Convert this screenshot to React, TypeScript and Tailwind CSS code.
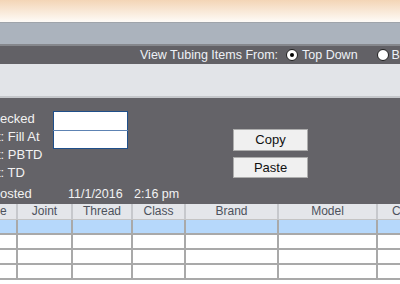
import React from "react";

const cols = [
    { w: "w-[18px]", label: "e", cls: "pl-0 text-left" },
    { w: "w-[55px]", label: "Joint", cls: "text-center" },
    { w: "w-[60px]", label: "Thread", cls: "text-center" },
    { w: "w-[53px]", label: "Class", cls: "text-center" },
    { w: "w-[93px]", label: "Brand", cls: "text-center" },
    { w: "w-[99px]", label: "Model", cls: "text-center" },
];

const Radio = ({ checked }: { checked?: boolean }) => (
    <span className="w-[12px] h-[12px] rounded-full bg-white border border-[#1e1e1e] flex items-center justify-center shrink-0">
        {checked && <span className="w-[4px] h-[4px] rounded-full bg-black" />}
    </span>
);

const Row = ({ selected }: { selected?: boolean }) => (
    <div className={`flex h-[15px] border-b-2 border-[#a9a9a9] ${selected ? "bg-[#b6d8fb]" : "bg-white"}`}>
        {cols.map((c, i) => (
            <div key={i} className={`${c.w} shrink-0 border-r-2 border-[#a9a9a9]`} />
        ))}
        <div className="flex-1" />
    </div>
);

export default function App() {
    return (
        <div className="w-[400px] h-[284px] overflow-hidden bg-white font-['Liberation_Sans',Arial,sans-serif]">
            {/* title gradient */}
            <div className="h-[22px] bg-gradient-to-b from-[#f3d5b6] to-[#fefbf7]" />
            <div className="h-px bg-[#9fa4aa]" />
            <div className="h-[21px] bg-[#abb3bd]" />
            <div className="h-[2px] bg-[#85878c]" />

            {/* view tubing bar */}
            <div className="h-[18px] bg-[#626166] flex items-center text-[12.5px] text-[#eef1f6] whitespace-nowrap">
                <span className="ml-[140px]">View Tubing Items From:</span>
                <span className="ml-[8px] flex items-center gap-[4px]">
                    <Radio checked />
                    <span>Top Down</span>
                </span>
                <span className="ml-[19px] flex items-center gap-[3px]">
                    <Radio />
                    <span>Bottom Up</span>
                </span>
            </div>

            <div className="h-[32px] bg-[#e2e4e8]" />
            <div className="h-[2px] bg-[#c5c7cb]" />

            {/* detail panel */}
            <div className="h-[106px] bg-[#646368] text-[13px] text-[#f2f2f2] pt-[12px] whitespace-nowrap">
                <div className="flex">
                    <div className="w-[53px] shrink-0 overflow-hidden">
                        <div className="h-[18px] leading-[18px]">ecked</div>
                        <div className="h-[18px] leading-[18px] -ml-[3px]">t: Fill At</div>
                        <div className="h-[18px] leading-[18px] -ml-[3px]">t: PBTD</div>
                        <div className="h-[18px] leading-[18px] -ml-[3px]">t: TD</div>
                    </div>
                    <div className="w-[75px] shrink-0 mt-px">
                        <div className="h-[19px] bg-white border border-[#1f4f8a] border-b-0" />
                        <div className="h-px bg-[#5d83b3]" />
                        <div className="h-[18px] bg-white border border-[#1f4f8a] border-t-0" />
                    </div>
                    <div className="ml-[105px] w-[75px] pt-[19px] flex flex-col gap-[6px] text-[#111]">
                        <button className="h-[22px] bg-[#f0f0f0] border border-[#adadad] text-[13px]">Copy</button>
                        <button className="h-[21px] bg-[#f0f0f0] border border-[#adadad] text-[13px]">Paste</button>
                    </div>
                </div>
                <div className="flex mt-[3px] h-[18px] leading-[18px]">
                    <span className="w-[68px]">osted</span>
                    <span className="w-[66px] text-[12.5px]">11/1/2016</span>
                    <span className="text-[12.5px]">2:16 pm</span>
                </div>
            </div>

            {/* grid */}
            <div className="flex h-[16px] bg-[#e4e6ea] border-b border-[#c4c4c4] text-[12px] leading-[15px] text-[#4d525c] whitespace-nowrap">
                {cols.map((c, i) => (
                    <div key={i} className={`${c.w} ${c.cls} shrink-0 border-r-2 border-[#c6c8cc] overflow-hidden`}>
                        {c.label}
                    </div>
                ))}
                <div className="flex-1 pl-[14px] overflow-hidden">Comments</div>
            </div>
            <Row selected />
            <Row />
            <Row />
            <Row />
        </div>
    );
}
